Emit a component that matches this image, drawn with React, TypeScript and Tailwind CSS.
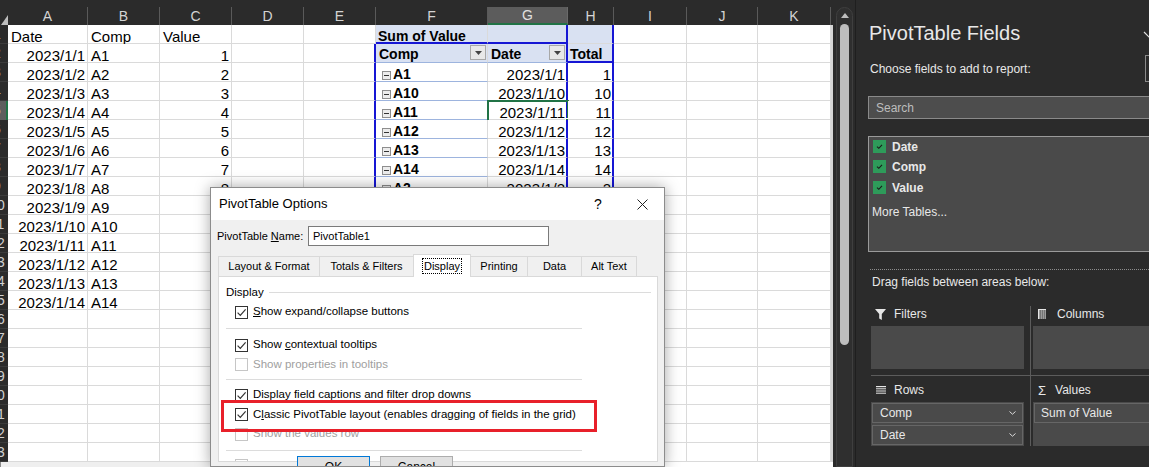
import React from "react";

const COLS = ["A", "B", "C", "D", "E", "F", "G", "H", "I", "J", "K"] as const;
type Col = (typeof COLS)[number];
const W: Record<Col, string> = {
  A: "w-[80px]",
  B: "w-[72px]",
  C: "w-[72px]",
  D: "w-[72px]",
  E: "w-[72px]",
  F: "w-[112px]",
  G: "w-[80px]",
  H: "w-[46px]",
  I: "w-[73px]",
  J: "w-[71px]",
  K: "w-[73px]",
};

const PIVOT = ["A1", "A10", "A11", "A12", "A13", "A14", "A2"];
const ROWS = Array.from({ length: 23 }, (_, i) => i + 1);

function cellClass(r: number, c: Col): string {
  const p: string[] = ["h-[19px] shrink-0 relative whitespace-nowrap", W[c]];
  if ((c === "E" && r >= 2) || ((c === "G" || c === "H") && r >= 1)) p.push("border-r-2 border-r-[#1616d4]");
  else p.push("border-r border-r-[#dadada]");
  if ((r === 1 && (c === "F" || c === "G")) || (r === 2 && c === "H")) p.push("border-b-2 border-b-[#1616d4]");
  else if ((r === 2 && (c === "F" || c === "G")) || (r >= 3 && c === "F")) p.push("border-b border-b-[#9db4de]");
  else p.push("border-b border-b-[#dadada]");
  if (r <= 2 && (c === "F" || c === "G" || c === "H")) p.push("bg-[#d9e1f2]");
  else p.push("bg-white");
  return p.join(" ");
}

function DropBtn() {
  return (
    <span className="ml-auto mr-[1px] w-[16px] h-[15px] bg-[#e8e8e8] border border-[#a8a8a8] flex items-center justify-center shrink-0">
      <svg width="7" height="4" viewBox="0 0 7 4">
        <path d="M0 0H7L3.5 4Z" fill="#444" />
      </svg>
    </span>
  );
}

function CellContent({ r, c }: { r: number; c: Col }) {
  const txt = "leading-[19px] pt-[2px]";
  if (r === 1) {
    if (c === "A") return <div className={`${txt} pl-[3px]`}>Date</div>;
    if (c === "B") return <div className={`${txt} pl-[3px]`}>Comp</div>;
    if (c === "C") return <div className={`${txt} pl-[3px]`}>Value</div>;
    if (c === "F") return <div className={`${txt} pl-[2px] font-bold text-[14px]`}>Sum of Value</div>;
    return null;
  }
  const n = r - 1;
  if (n <= 14) {
    if (c === "A") return <div className={`${txt} text-right pr-[2px]`}>{`2023/1/${n}`}</div>;
    if (c === "B") return <div className={`${txt} pl-[3px]`}>{`A${n}`}</div>;
    if (c === "C" && n <= 8) return <div className={`${txt} text-right pr-[2px]`}>{n}</div>;
  }
  if (r === 2) {
    if (c === "F")
      return (
        <div className="flex items-start h-full">
          <span className="leading-[19px] pt-[1px] pl-[3px] font-bold text-[14px]">Comp</span>
          <span className="ml-auto mt-[1px] flex">
            <DropBtn />
          </span>
        </div>
      );
    if (c === "G")
      return (
        <div className="flex items-start h-full">
          <span className="leading-[19px] pt-[1px] pl-[3px] font-bold text-[14px]">Date</span>
          <span className="ml-auto mt-[1px] flex">
            <DropBtn />
          </span>
        </div>
      );
    if (c === "H") return <div className="leading-[19px] pt-[1px] pl-[2px] font-bold text-[14px]">Total</div>;
  }
  const k = r - 3;
  if (k >= 0 && k < PIVOT.length) {
    const name = PIVOT[k];
    const num = parseInt(name.slice(1), 10);
    if (c === "F")
      return (
        <div className="flex items-start pl-[6px] gap-[2px]">
          <span className="mt-[8px] w-[9px] h-[9px] border border-[#8e8e8e] bg-[#ececec] flex items-center justify-center shrink-0">
            <span className="w-[5px] h-px bg-[#333]" />
          </span>
          <span className="leading-[19px] pt-[2px] font-bold text-[14px]">{name}</span>
        </div>
      );
    if (c === "G")
      return (
        <>
          <div className={`${txt} text-right pr-[1px]`}>{`2023/1/${num}`}</div>
          {r === 5 && (
            <>
              <div className="absolute left-[-1px] top-[-1px] w-[82px] h-[22px] border-2 border-[#217346]" />
              <div className="absolute right-[-4px] bottom-[-4px] w-[5px] h-[5px] bg-[#217346] border border-white" />
            </>
          )}
        </>
      );
    if (c === "H") return <div className={`${txt} text-right pr-[1px]`}>{num}</div>;
  }
  return null;
}

function Spreadsheet() {
  return (
    <div className="w-[833px] h-[467px] bg-[#2b2b2b] flex flex-col shrink-0 font-['Liberation_Sans',Arial,sans-serif] text-[15px] text-black overflow-hidden">
      <div className="h-[7px] shrink-0" />
      <div className="h-[18px] flex shrink-0">
        <div className="w-[8px] h-[18px] flex items-end justify-end shrink-0">
          <svg width="7" height="10" viewBox="0 0 7 10">
            <path d="M7 0V10H0Z" fill="#bdbdbd" />
          </svg>
        </div>
        {COLS.map((c) => (
          <div
            key={c}
            className={
              c === "G"
                ? `${W[c]} h-[18px] shrink-0 bg-[#5c5c5c] border-r border-r-[#6a6a6a] border-b-2 border-b-[#217346] text-center text-[14px] leading-[17px] text-[#e0e0e0]`
                : `${W[c]} h-[18px] shrink-0 border-r border-r-[#5a5a5a] text-center text-[14px] leading-[18px] text-[#d4d4d4]`
            }
          >
            {c}
          </div>
        ))}
      </div>
      {ROWS.map((r) => (
        <div key={r} className="flex h-[19px] shrink-0">
          <div
            className={
              r === 5
                ? "w-[8px] h-[19px] overflow-hidden shrink-0 bg-[#5e5e5e] border-r-2 border-r-[#217346]"
                : "w-[8px] h-[19px] overflow-hidden shrink-0 bg-[#2b2b2b] border-b border-b-[#3b3b3b]"
            }
          >
            <div className="ml-[-14px] w-[22px] text-center text-[14px] leading-[19px] text-[#d0d0d0]">{r}</div>
          </div>
          {COLS.map((c) => (
            <div key={c} className={cellClass(r, c)}>
              <CellContent r={r} c={c} />
            </div>
          ))}
          <div className="w-[2px] h-[19px] bg-[#d6d6d6] shrink-0" />
        </div>
      ))}
      <div className="flex h-[5px] shrink-0">
        <div className="w-[210px] bg-[#efefef] border-l border-l-[#8a8a8a]" />
        <div className="flex-1 bg-white" />
      </div>
    </div>
  );
}

function Check() {
  return (
    <svg width="11" height="11" viewBox="0 0 11 11">
      <path d="M1.6 5.6 4.3 8.4 9.6 2.4" fill="none" stroke="#333" strokeWidth="1.2" />
    </svg>
  );
}

function OptRow({
  children,
  checked,
  disabled,
  tall,
}: {
  children?: React.ReactNode;
  checked?: boolean;
  disabled?: boolean;
  tall?: boolean;
}) {
  return (
    <div className={tall ? "h-[20px] flex items-center pl-[16px]" : "h-[19px] flex items-center pl-[16px]"}>
      <span
        className={
          disabled
            ? "w-[13px] h-[13px] shrink-0 border border-[#c6c6c6] bg-white"
            : "w-[13px] h-[13px] shrink-0 border border-[#333333] bg-white flex items-center justify-center"
        }
      >
        {checked && <Check />}
      </span>
      {children && (
        <span className={disabled ? "ml-[5px] text-[11.5px] text-[#a0a0a0] whitespace-nowrap" : "ml-[5px] text-[11.5px] text-black whitespace-nowrap"}>
          {children}
        </span>
      )}
    </div>
  );
}

function Sep() {
  return <div className="ml-[7px] w-[356px] h-px bg-[#dcdcdc]" />;
}

function Dialog() {
  return (
    <div className="absolute left-[210px] top-[187px] w-[455px] h-[280px] border border-[#8c8c8c] bg-[#f0f0f0] shadow-[0_0_14px_rgba(0,0,0,0.35)] flex flex-col overflow-hidden font-['Liberation_Sans',Arial,sans-serif] text-black">
      <div className="h-[32px] bg-white flex items-center shrink-0">
        <span className="w-[383px] pl-[8px] text-[13px]">PivotTable Options</span>
        <span className="w-[10px] text-[14px]">?</span>
        <span className="ml-[33px] flex">
          <svg width="11" height="11" viewBox="0 0 11 11">
            <path d="M0.5 0.5 10.5 10.5M10.5 0.5 0.5 10.5" stroke="#222" strokeWidth="1" />
          </svg>
        </span>
      </div>
      <div className="mt-[6px] h-[20px] flex items-center pl-[6px] shrink-0">
        <span className="w-[91px] text-[11px] whitespace-nowrap">
          PivotTable <u>N</u>ame:
        </span>
        <div className="w-[241px] h-[20px] border border-[#7a7a7a] bg-white flex items-center pl-[4px] text-[11px]">PivotTable1</div>
      </div>
      <div className="mt-[8px] h-[22px] pl-[7px] flex items-end text-[11px] shrink-0">
        <div className="w-[101px] h-[20px] border-t border-l border-[#d9d9d9] flex items-center justify-center whitespace-nowrap">
          Layout &amp; Format
        </div>
        <div className="w-[94px] h-[20px] border-t border-l border-[#d9d9d9] flex items-center justify-center whitespace-nowrap">
          Totals &amp; Filters
        </div>
        <div className="w-[58px] h-[23px] mb-[-1px] relative z-10 bg-white border-t border-l border-r border-[#d9d9d9] flex items-center justify-center">
          <span className="border border-dotted border-black px-[1px] leading-[14px]">Display</span>
        </div>
        <div className="w-[57px] h-[20px] border-t border-r border-[#d9d9d9] flex items-center justify-center">Printing</div>
        <div className="w-[54px] h-[20px] border-t border-r border-[#d9d9d9] flex items-center justify-center">Data</div>
        <div className="w-[55px] h-[20px] border-t border-r border-[#d9d9d9] flex items-center justify-center">Alt Text</div>
      </div>
      <div className="ml-[7px] w-[440px] h-[186px] shrink-0 bg-white border border-[#d9d9d9] overflow-hidden">
        <div className="h-[25px] pt-[7px] pl-[7px] pr-[6px] flex items-start">
          <span className="text-[11.5px] leading-[16px]">Display</span>
          <span className="flex-1 ml-[5px] mt-[8px] h-px bg-[#dcdcdc]" />
        </div>
        <OptRow checked tall>
          <u>S</u>how expand/collapse buttons
        </OptRow>
        <div className="mt-[6px]">
          <Sep />
        </div>
        <div className="mt-[6px]">
          <OptRow checked tall>
            Show <u>c</u>ontextual tooltips
          </OptRow>
        </div>
        <OptRow disabled>Show properties in tooltips</OptRow>
        <div className="mt-[5px]">
          <Sep />
        </div>
        <div className="mt-[5px]">
          <OptRow checked tall>
            Display field captions and filter drop downs
          </OptRow>
        </div>
        <OptRow checked>
          C<u>l</u>assic PivotTable layout (enables dragging of fields in the grid)
        </OptRow>
        <OptRow disabled tall>
          Show the values row
        </OptRow>
        <div className="mt-[6px]">
          <Sep />
        </div>
        <div className="mt-[4px]">
          <OptRow disabled tall />
        </div>
      </div>
      <div className="mt-[-6px] relative z-10 flex text-[12px] shrink-0">
        <div className="ml-[86px] w-[73px] h-[23px] border border-[#0078d7] bg-[#e1e1e1] flex items-start justify-center pt-[3px] leading-[14px]">OK</div>
        <div className="ml-[10px] w-[73px] h-[23px] border border-[#adadad] bg-[#e1e1e1] flex items-start justify-center pt-[3px] leading-[14px]">Cancel</div>
      </div>
    </div>
  );
}

function Scrollbar() {
  return (
    <div className="w-[22px] h-[467px] bg-[#2b2b2b] shrink-0 flex flex-col">
      <div className="mt-[7px] ml-[3px] w-[17px] h-[470px] rounded-t-[9px] border border-[#3f3f3f] bg-[#2f2f2f] flex flex-col items-center">
        <svg className="mt-[5px]" width="8" height="5" viewBox="0 0 8 5">
          <path d="M0 5H8L4 0Z" fill="#bdbdbd" />
        </svg>
        <div className="mt-[6px] w-[9px] h-[321px] rounded-full bg-[#bebebe]" />
      </div>
    </div>
  );
}

function ItemChevron() {
  return (
    <svg width="7" height="4" viewBox="0 0 7 4" className="ml-auto mr-[6px]">
      <path d="M0.5 0.5 3.5 3.2 6.5 0.5" fill="none" stroke="#dcdcdc" strokeWidth="1" />
    </svg>
  );
}

function GreenCb() {
  return (
    <span className="w-[13px] h-[13px] bg-[#2e9b5a] flex items-center justify-center shrink-0">
      <svg width="9" height="9" viewBox="0 0 9 9">
        <path d="M2 4.6 3.8 6.3 7 2.8" fill="none" stroke="#1a1a1a" strokeWidth="1.1" />
      </svg>
    </span>
  );
}

function FieldsPanel() {
  return (
    <div className="w-[294px] h-[467px] bg-[#2b2b2b] border-l border-l-[#1f1f1f] text-[#e8e8e8] overflow-hidden flex flex-col font-['Liberation_Sans',Arial,sans-serif]">
      <div className="mt-[21px] h-[24px] flex items-center shrink-0">
        <span className="ml-[13px] text-[20px] leading-[24px] whitespace-nowrap">PivotTable Fields</span>
        <svg className="ml-auto mr-[-6px] mt-[4px] shrink-0" width="12" height="8" viewBox="0 0 12 8">
          <path d="M1 1 6 6 11 1" stroke="#e0e0e0" strokeWidth="1.2" fill="none" />
        </svg>
      </div>
      <div className="mt-[10px] h-[27px] flex items-center shrink-0">
        <span className="ml-[14px] text-[12px] whitespace-nowrap">Choose fields to add to report:</span>
        <span className="ml-auto mr-[-16px] w-[20px] h-[27px] border border-[#8a8a8a] shrink-0" />
      </div>
      <div className="mt-[14px] ml-[12px] mr-[-10px] h-[23px] shrink-0 bg-[#4d4d4d] border border-[#8a8a8a] flex items-center pl-[7px] text-[12px] text-[#bdbdbd]">
        Search
      </div>
      <div className="mt-[17px] ml-[12px] mr-[-10px] h-[116px] shrink-0 bg-[#4a4a4a] border border-[#9a9a9a] flex flex-col text-[12px]">
        <div className="h-[19px] flex items-center pl-[4px]">
          <GreenCb />
          <span className="ml-[6px] font-bold">Date</span>
        </div>
        <div className="h-[21px] flex items-center pl-[4px]">
          <GreenCb />
          <span className="ml-[6px] font-bold">Comp</span>
        </div>
        <div className="h-[21px] flex items-center pl-[4px]">
          <GreenCb />
          <span className="ml-[6px] font-bold">Value</span>
        </div>
        <div className="mt-[4px] h-[20px] flex items-center pl-[3px]">More Tables...</div>
      </div>
      <div className="mt-[17px] ml-[14px] mr-[-10px] h-0 border-t border-dotted border-[#8c8c8c] shrink-0" />
      <div className="mt-[3px] h-[18px] flex items-center ml-[16px] text-[12px] whitespace-nowrap shrink-0">
        Drag fields between areas below:
      </div>
      <div className="mt-[15px] ml-[15px] flex flex-col text-[12px] shrink-0">
        <div className="h-[69px] flex">
          <div className="w-[153px] flex flex-col shrink-0">
            <div className="h-[16px] flex items-center pl-[4px]">
              <svg width="11" height="11" viewBox="0 0 11 11">
                <path d="M0 0H11L6.8 5V11L4.2 9.4V5Z" fill="#e6e6e6" />
              </svg>
              <span className="ml-[8px]">Filters</span>
            </div>
            <div className="mt-[4px] h-[43px] bg-[#4a4a4a]" />
          </div>
          <div className="ml-[6px] w-px bg-[#5c5c5c] shrink-0" />
          <div className="ml-[2px] w-[130px] flex flex-col shrink-0">
            <div className="h-[16px] flex items-center pl-[5px]">
              <svg width="9" height="10" viewBox="0 0 9 10">
                <rect x="0" y="0" width="1.6" height="10" fill="#e6e6e6" />
                <rect x="2.6" y="0" width="1" height="10" fill="#e6e6e6" />
                <rect x="4.6" y="0" width="1" height="10" fill="#e6e6e6" />
                <rect x="6.6" y="0" width="1" height="10" fill="#e6e6e6" />
                <rect x="0" y="0" width="8" height="1" fill="#e6e6e6" />
              </svg>
              <span className="ml-[10px]">Columns</span>
            </div>
            <div className="mt-[4px] h-[43px] bg-[#4a4a4a]" />
          </div>
        </div>
        <div className="h-px w-[300px] bg-[#5c5c5c]" />
        <div className="h-[70px] flex">
          <div className="w-[153px] flex flex-col shrink-0">
            <div className="mt-[6px] h-[16px] flex items-center pl-[5px]">
              <svg width="10" height="8" viewBox="0 0 10 8">
                <rect x="0" y="0" width="10" height="1.2" fill="#e6e6e6" />
                <rect x="0" y="2.3" width="10" height="1" fill="#e6e6e6" />
                <rect x="0" y="4.5" width="10" height="1" fill="#e6e6e6" />
                <rect x="0" y="6.7" width="10" height="1" fill="#e6e6e6" />
              </svg>
              <span className="ml-[8px]">Rows</span>
            </div>
            <div className="mt-[4px] h-[44px] bg-[#4a4a4a] pt-[1px] pl-[1px]">
              <div className="w-[151px] h-[20px] border border-[#666666] bg-[#4a4a4a] flex items-center pl-[7px]">
                <span>Comp</span>
                <ItemChevron />
              </div>
              <div className="mt-[2px] w-[151px] h-[20px] border border-[#666666] bg-[#4a4a4a] flex items-center pl-[7px]">
                <span>Date</span>
                <ItemChevron />
              </div>
            </div>
          </div>
          <div className="ml-[6px] w-px bg-[#5c5c5c] shrink-0" />
          <div className="ml-[2px] w-[130px] flex flex-col shrink-0">
            <div className="mt-[6px] h-[16px] flex items-center pl-[5px]">
              <span className="text-[13px] leading-[13px]">Σ</span>
              <span className="ml-[9px]">Values</span>
            </div>
            <div className="mt-[4px] h-[44px] bg-[#4a4a4a] pt-[1px] pl-[1px]">
              <div className="w-[140px] h-[20px] border border-[#666666] bg-[#4a4a4a] flex items-center pl-[6px] whitespace-nowrap">
                Sum of Value
              </div>
            </div>
          </div>
        </div>
      </div>
    </div>
  );
}

export default function App() {
  return (
    <div className="relative w-[1149px] h-[467px] overflow-hidden flex bg-[#2b2b2b]">
      <Spreadsheet />
      <Scrollbar />
      <FieldsPanel />
      <Dialog />
      <div className="absolute left-[221px] top-[400px] w-[376px] h-[32px] border-[3px] border-[#e8202a]" />
    </div>
  );
}
